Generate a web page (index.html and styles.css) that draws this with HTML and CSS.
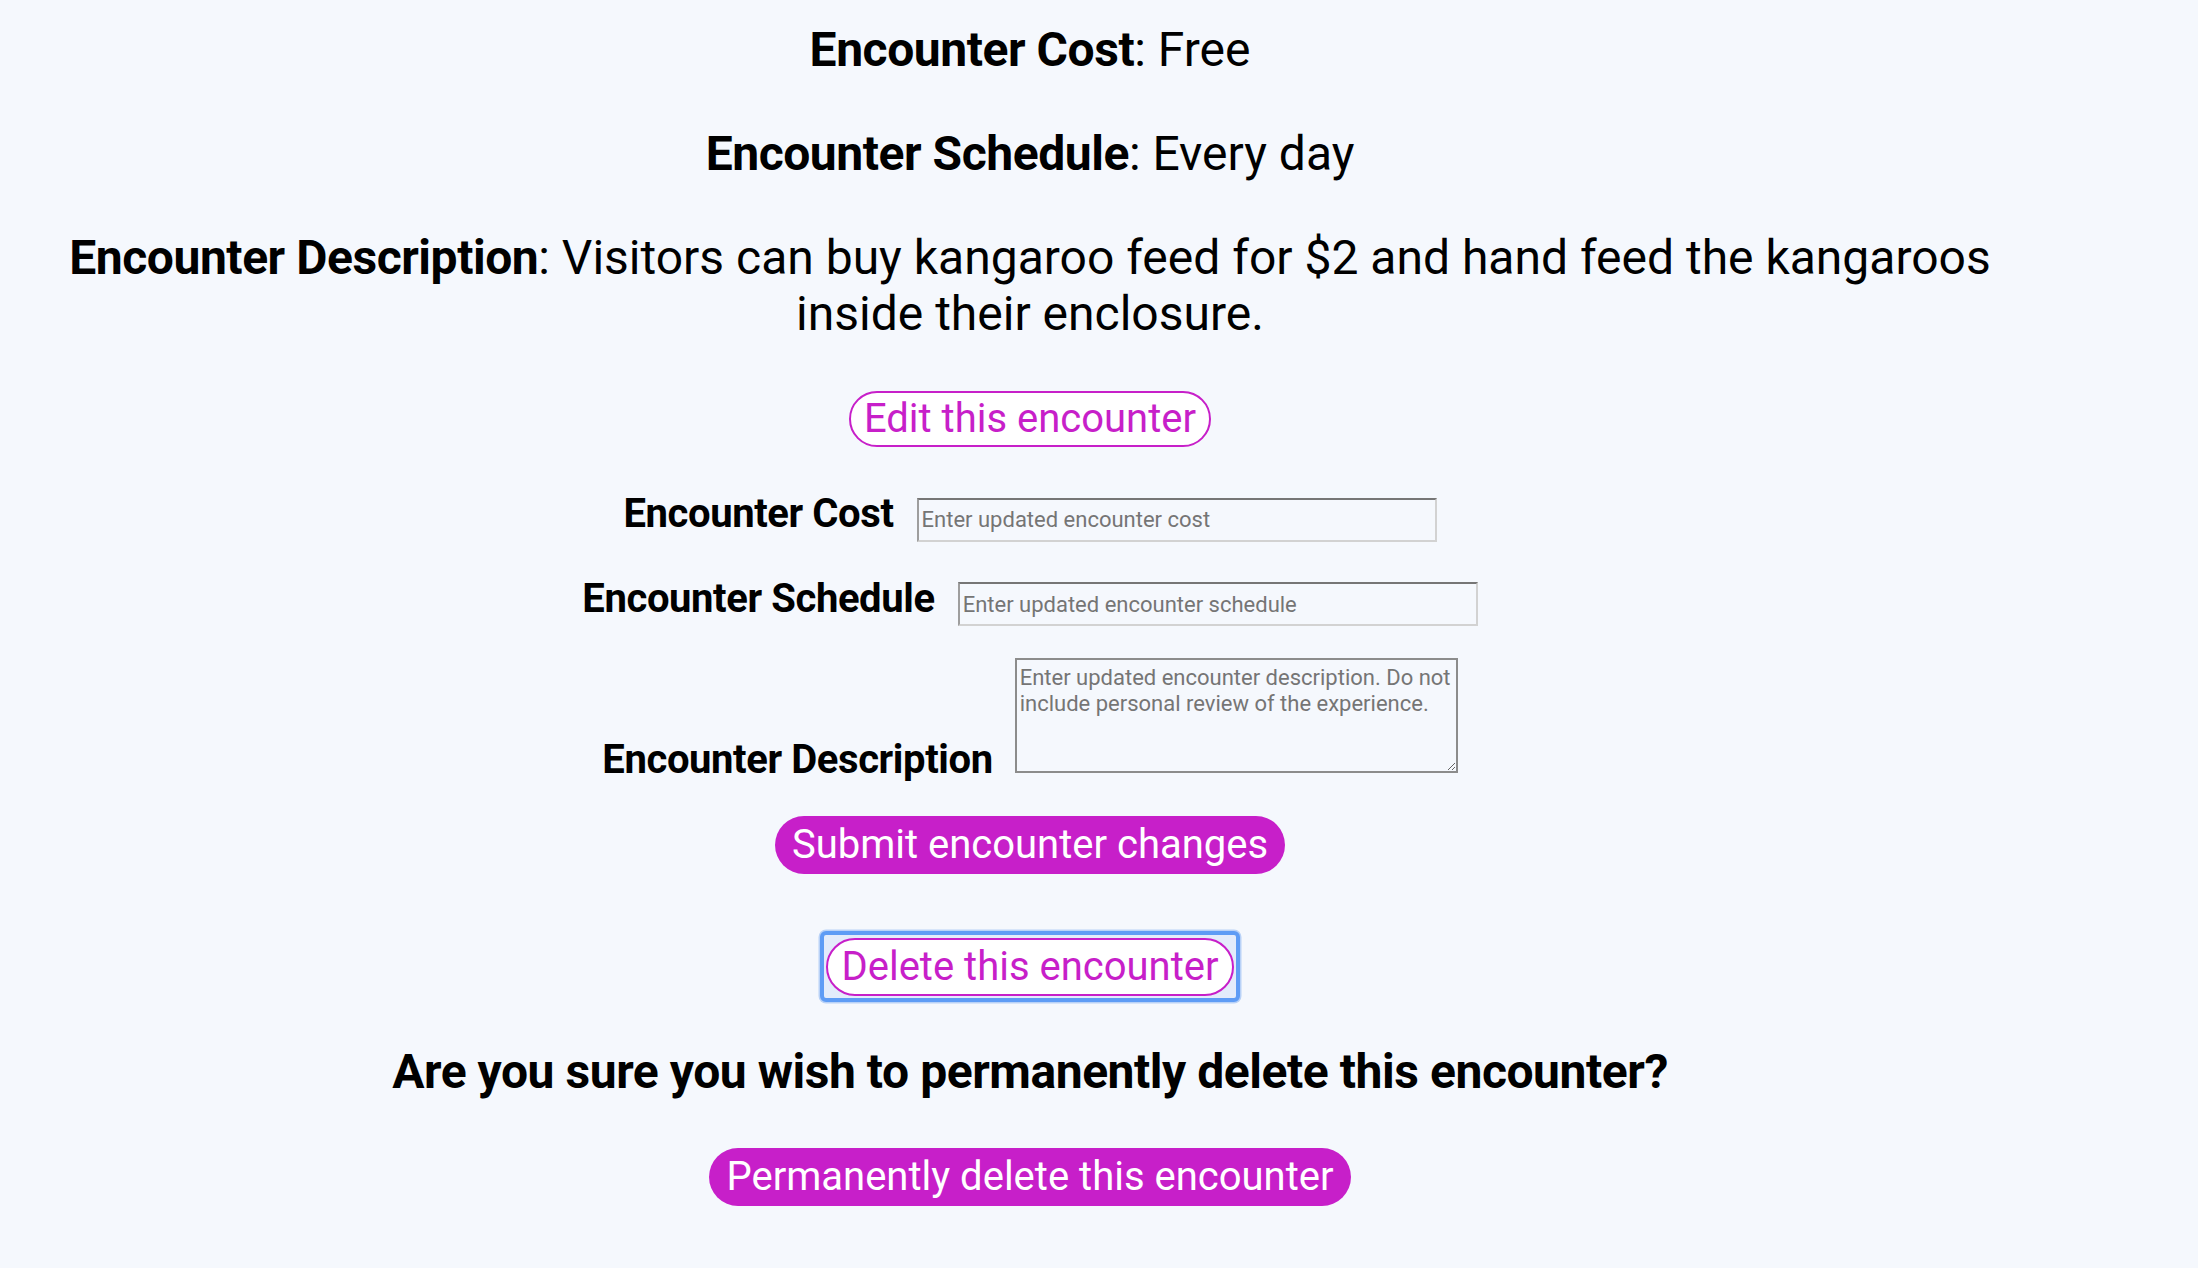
FILE: index.html
```html
<!DOCTYPE html>
<html lang="en">
<head>
<meta charset="utf-8">
<title>Encounter</title>
<link rel="stylesheet" href="styles.css">
</head>
<body>
<main class="page">
  <p class="info"><strong>Encounter Cost</strong>: Free</p>
  <p class="info"><strong>Encounter Schedule</strong>: Every day</p>
  <p class="info"><strong>Encounter Description</strong>: Visitors can buy kangaroo feed for $2 and hand feed the kangaroos inside their enclosure.</p>

  <div class="action edit-action">
    <button class="btn btn-outline" type="button">Edit this encounter</button>
  </div>

  <form class="edit-form">
    <div class="row row-cost">
      <label class="field-label" for="cost">Encounter Cost</label><input class="field-input" id="cost" type="text" placeholder="Enter updated encounter cost">
    </div>
    <div class="row row-schedule">
      <label class="field-label" for="schedule">Encounter Schedule</label><input class="field-input" id="schedule" type="text" placeholder="Enter updated encounter schedule">
    </div>
    <div class="row row-desc">
      <label class="field-label" for="desc">Encounter Description</label><textarea class="field-area" id="desc" placeholder="Enter updated encounter description. Do not include personal review of the experience."></textarea>
    </div>
    <div class="action submit-action">
      <button class="btn btn-filled" type="button">Submit encounter changes</button>
    </div>
  </form>

  <div class="action delete-action">
    <span class="focus-ring"><button class="btn btn-outline btn-thin" type="button">Delete this encounter</button></span>
  </div>

  <h3 class="confirm">Are you sure you wish to permanently delete this encounter?</h3>

  <div class="action perm-action">
    <button class="btn btn-filled" type="button">Permanently delete this encounter</button>
  </div>
</main>
</body>
</html>
```

FILE: styles.css
```css
html, body {
  margin: 0;
  padding: 0;
  background: #f5f8fd;
}

body {
  font-family: Roboto, "Noto Sans", "Liberation Sans", sans-serif;
  color: #000;
}

.page {
  width: 1960px;
  margin-left: 50px;
  padding-top: 22px;
  text-align: center;
}

.info {
  font-size: 48px;
  line-height: 56px;
  margin: 0 0 48px;
}

.info:last-of-type {
  margin-bottom: 0;
}

.info strong {
  font-weight: 700;
  letter-spacing: -0.45px;
}

.action {
  display: flex;
  justify-content: center;
}

.edit-action {
  margin-top: 49px;
}

.btn {
  font-family: Roboto, "Noto Sans", "Liberation Sans", sans-serif;
  font-size: 40px;
  line-height: 54px;
  padding: 0 16px;
  border-radius: 999px;
  cursor: pointer;
  white-space: nowrap;
}

.btn-outline {
  background: #ffffff;
  color: #c71fc9;
  border: 2px solid #c71fc9;
  height: 56px;
  line-height: 52px;
  padding: 0 13px;
}

.btn-thin {
  height: 58px;
  line-height: 54px;
}

.btn-filled {
  background: #c71fc9;
  color: #ffffff;
  border: none;
  height: 58px;
  padding: 0 17px;
}

.edit-form {
  margin-top: 43px;
}

.row {
  font-size: 40px;
  line-height: 47px;
  text-align: center;
}

.row-cost {
  margin-bottom: 33px;
}

.row-schedule {
  margin-bottom: 32px;
}

.row-desc {
  margin-bottom: 33px;
}

.field-label {
  font-weight: 700;
  letter-spacing: -0.4px;
}

.field-input {
  box-sizing: border-box;
  width: 520px;
  height: 44px;
  margin-left: 23px;
  padding: 0 3px;
  font-family: Roboto, "Noto Sans", "Liberation Sans", sans-serif;
  font-size: 22px;
  background: #f5f8fd;
  border-style: solid;
  border-width: 2px;
  border-color: #767676 #d2d2d2 #d2d2d2 #9e9e9e;
  vertical-align: baseline;
}

.field-area {
  box-sizing: border-box;
  width: 443px;
  height: 115px;
  margin-left: 22px;
  padding: 5px 3px 2px;
  font-family: Roboto, "Noto Sans", "Liberation Sans", sans-serif;
  font-size: 22px;
  line-height: 26px;
  background: #f5f8fd;
  border: 2px solid #8c8c8c;
  resize: both;
  vertical-align: baseline;
}

.field-input::placeholder,
.field-area::placeholder {
  color: #757575;
}

.delete-action {
  margin-top: 57px;
}

.focus-ring {
  display: inline-flex;
  padding: 2.5px;
  border: 4px solid #5e9cf5;
  border-radius: 6px;
  background: #e3ecfb;
  box-shadow: 0 0 0 1.5px #b9d2f7;
}

.confirm {
  font-size: 48px;
  line-height: 56px;
  font-weight: 700;
  letter-spacing: -0.45px;
  margin: 42px 0 0;
}

.perm-action {
  margin-top: 48px;
}
```
